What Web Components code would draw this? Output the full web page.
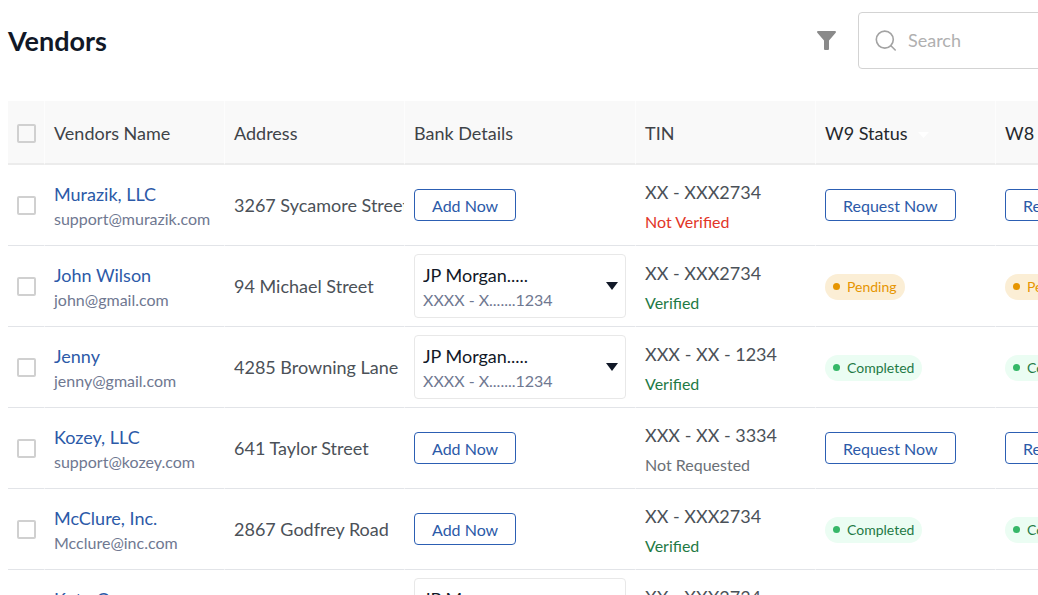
<!DOCTYPE html>
<html lang="en">
<head>
<meta charset="utf-8">
<title>Vendors</title>
<style>
html { scrollbar-width: none; }
body { margin: 0; background: #fff; color: #4b5158; font-family: Lato, "Liberation Sans", sans-serif; font-size: 18px; line-height: 24px; }
</style>
</head>
<body>
<vendors-page></vendors-page>
<script>
const define = (name, html, init) => {
  const template = document.createElement('template');
  template.innerHTML = html;
  customElements.define(name, class extends HTMLElement {
    connectedCallback() {
      if (this.shadowRoot) return;
      const root = this.attachShadow({ mode: 'open' });
      root.append(template.content.cloneNode(true));
      if (init) init(this, root);
    }
  });
};

define('outline-button', `
<style>
:host { display: inline-block; vertical-align: middle; }
button { display: block; height: 32px; padding: 2px 17px 0; border: 1px solid #2c5fb3; border-radius: 4px; background: #fff; color: #2c5aa8; font: inherit; font-size: 16px; white-space: nowrap; }
</style>
<button type="button"><slot></slot></button>`);

define('status-pill', `
<style>
:host { display: inline-flex; align-items: center; gap: 7px; height: 26px; padding: 0 8px; border-radius: 13px; background: #ebfdf3; color: #1f7a45; font-size: 14px; vertical-align: middle; white-space: nowrap; }
:host([kind="pending"]) { background: #fbeed5; color: #e69500; }
i { width: 7px; height: 7px; border-radius: 50%; background: #36b768; }
:host([kind="pending"]) i { background: #e69500; }
</style>
<i></i><slot></slot>`);

define('two-lines', `
<style>
:host { display: flex; flex-direction: column; gap: 1px; padding-top: 3px; white-space: nowrap; }
.sub { color: #6f7891; font-size: 16px; }
:host([kind="tin"]) { gap: 6px; }
:host([kind="tin"]) .sub { color: #6b7076; }
:host([status="ok"]) .sub { color: #1f7a45; }
:host([status="bad"]) .sub { color: #e23527; }
</style>
<slot></slot><span class="sub"><slot name="sub"></slot></span>`);

define('bank-select', `
<style>
:host { display: grid; height: 64px; margin-right: 9px; }
select, span, svg { grid-area: 1 / 1; }
select { width: 100%; appearance: none; border: 1px solid #e8e8e8; border-radius: 4px; background: #fff; padding: 0 32px 22px 8px; color: #111827; font: inherit; }
span { align-self: end; padding: 0 0 6px 9px; color: #6f7891; font-size: 16px; pointer-events: none; }
svg { place-self: center end; margin-right: 8px; pointer-events: none; }
</style>
<select aria-label="Bank account"><option>JP Morgan.....</option></select>
<span>XXXX - X.......1234</span>
<svg width="12" height="8" viewBox="0 0 12 8"><path d="M0 0h12L6 8z" fill="#111827"/></svg>`);

define('check-box', `
<style>
:host { display: block; }
input { display: block; appearance: none; width: 19px; height: 19px; margin: 0; border: 2px solid #d0d0d0; border-radius: 2px; background: transparent; }
</style>
<input type="checkbox">`, (host, root) => root.querySelector('input').setAttribute('aria-label', host.getAttribute('label')));

define('search-box', `
<style>
:host { display: flex; align-items: center; gap: 11px; box-sizing: border-box; height: 57px; padding: 0 16px; border: 1px solid #d3d3d3; border-radius: 4px; background: #fff; }
input { flex: 1; min-width: 0; border: 0; outline: 0; padding: 0 0 2px; background: none; color: #4b5158; font: inherit; }
input::placeholder { color: #b0b0b0; opacity: 1; }
</style>
<svg width="22" height="22" viewBox="0 0 22 22" fill="none" stroke="#a3a3a3" stroke-width="1.600" stroke-linecap="round"><circle cx="9.800" cy="9.600" r="8.500"/><path d="M15.900 15.700l4.300 4.300"/></svg>
<input type="search" placeholder="Search" aria-label="Search vendors">`);

define('page-header', `
<style>
:host { display: flex; align-items: center; padding: 12px 0 32px; }
h1 { flex: 1; margin: 0; color: #111827; font-size: 27px; line-height: 36px; font-weight: 700; }
button { display: block; border: 0; padding: 0; margin-right: 22px; background: none; }
svg { display: block; }
search-box { width: 317px; }
</style>
<h1><slot></slot></h1>
<button type="button" aria-label="Filter"><svg width="19" height="19" viewBox="0 0 19 19"><path d="M1.200 0h16.600c1 0 1.500 1 .9 1.800L12 9.400v8.300c0 .8-.5 1.300-1.300 1.300H8.300C7.500 19 7 18.500 7 17.700V9.400L.3 1.800C-.3 1 .2 0 1.200 0z" fill="#8a8a8a"/></svg></button>
<search-box></search-box>`);

const vendors = [
  ['Murazik, LLC', 'support@murazik.com', '3267 Sycamore Street', false, 'XX - XXX2734', 'Not Verified', 'Request Now'],
  ['John Wilson', 'john@gmail.com', '94 Michael Street', true, 'XX - XXX2734', 'Verified', 'Pending'],
  ['Jenny', 'jenny@gmail.com', '4285 Browning Lane', true, 'XXX - XX - 1234', 'Verified', 'Completed'],
  ['Kozey, LLC', 'support@kozey.com', '641 Taylor Street', false, 'XXX - XX - 3334', 'Not Requested', 'Request Now'],
  ['McClure, Inc.', 'Mcclure@inc.com', '2867 Godfrey Road', false, 'XX - XXX2734', 'Verified', 'Completed'],
  ['Kutu Co.', '', '', true, 'XX - XXX2734', '', '']
];
const form = s => !s ? '' : s === 'Request Now' ? `<outline-button>${s}</outline-button>` : `<status-pill kind="${s.toLowerCase()}">${s}</status-pill>`;
const tinStatus = { 'Verified': 'ok', 'Not Verified': 'bad' };
const row = ([name, mail, address, bank, tin, check, w]) => `
<tr>
<td><check-box label="Select ${name}"></check-box></td>
<td><two-lines><a href="#">${name}</a><span slot="sub">${mail || '&nbsp;'}</span></two-lines></td>
<td class="address">${address}</td>
<td>${bank ? '<bank-select></bank-select>' : '<outline-button>Add Now</outline-button>'}</td>
<td><two-lines kind="tin" status="${tinStatus[check] || ''}">${tin}<span slot="sub">${check || '&nbsp;'}</span></two-lines></td>
<td>${form(w)}</td>
<td>${form(w)}</td>
</tr>`;

define('vendor-table', `
<style>
:host { display: block; }
table { width: 100%; table-layout: fixed; border-collapse: separate; border-spacing: 0; }
th, td { box-sizing: border-box; padding: 0 0 0 9px; border-left: 1px solid #fff; text-align: left; white-space: nowrap; overflow: hidden; vertical-align: middle; }
th:first-child, td:first-child { padding-left: 9px; border-left: 0; }
th { height: 64px; padding-top: 2px; border-bottom: 2px solid #ececec; border-left-color: #fdfdfd; background: #f9f9f9; color: #3f4348; font-weight: 400; }
td { height: 81px; border-bottom: 1px solid #e2e4e8; }
th.form { color: #25282c; }
a { color: #2c5aa8; text-decoration: none; }
svg { margin-left: 10px; vertical-align: middle; }
</style>
<table>
<colgroup><col style="width:36px"><col style="width:180px"><col style="width:180px"><col style="width:231px"><col style="width:180px"><col style="width:180px"><col style="width:180px"></colgroup>
<thead><tr><th><check-box label="Select all vendors"></check-box></th><th>Vendors Name</th><th>Address</th><th>Bank Details</th><th>TIN</th><th class="form">W9 Status<svg width="11" height="6" viewBox="0 0 11 6"><path d="M0 0h11L5.500 6z" fill="#fff"/></svg></th><th class="form">W8 Status</th></tr></thead>
<tbody>${vendors.map(row).join('')}</tbody>
</table>`);

define('vendors-page', `
<style>
:host { display: block; overflow: hidden; }
main { min-width: 1167px; padding-left: 8px; }
</style>
<main><page-header>Vendors</page-header><vendor-table></vendor-table></main>`);
</script>
</body>
</html>
